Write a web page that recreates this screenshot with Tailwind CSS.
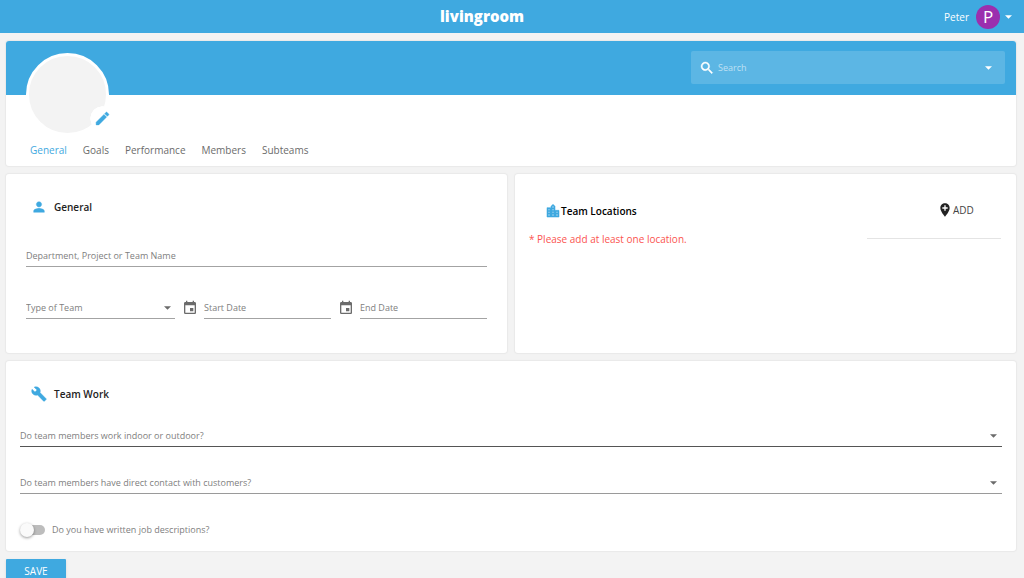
<!DOCTYPE html>
<html lang="en" class="[scrollbar-width:none]">
<head>
<meta charset="utf-8">
<meta name="viewport" content="width=device-width, initial-scale=1">
<title>livingroom</title>
<script src="https://cdn.jsdelivr.net/npm/@tailwindcss/browser@4"></script>
</head>
<body class="bg-[#f3f3f3] font-['Open_Sans','Noto_Sans',sans-serif] text-[9px] leading-4 text-[#808080]">
<header class="flex items-center h-[33px] bg-[#3fa9e0] pl-5 pr-3 text-white">
  <div class="flex-1 text-center">
    <a href="#" class="block pb-px font-extrabold text-[15px] leading-8">livingroom</a>
  </div>
  <button type="button" class="flex items-center gap-[7px] text-[10px]">
    <span>Peter</span>
    <span class="flex items-center justify-center size-6 rounded-full bg-[#9b2fae] text-[17px]">P</span>
    <svg class="w-[7px] h-1 -ml-[2px]" viewBox="0 0 8 4" fill="currentColor"><path d="M0 0h8L4 4z"/></svg>
  </button>
</header>

<main class="flex flex-col gap-2 pt-2 pl-[6px] pr-2">
  <section class="rounded-[3px] bg-white shadow-[0_0_1px_1px_#e9e9e9]">
    <div class="flex justify-end h-[54px] rounded-t-[3px] bg-[#3fa9e0] pt-[10px] pr-[11px]">
      <div class="flex items-center w-[314px] h-[33px] rounded-[2px] bg-[#5cb6e4] pl-2 pr-[13px] text-white">
        <svg class="size-4" viewBox="0 0 24 24" fill="currentColor" stroke="currentColor" stroke-width=".6"><path d="M15.5 14h-.79l-.28-.27A6.47 6.47 0 0 0 16 9.5 6.5 6.5 0 1 0 9.5 16c1.61 0 3.09-.59 4.23-1.57l.27.28v.79l5 4.99L20.49 19l-4.99-5zm-6 0C7.01 14 5 11.99 5 9.5S7.01 5 9.500 5 14 7.010 14 9.500 11.990 14 9.500 14z"/></svg>
        <input type="search" aria-label="Search" placeholder="Search" class="min-w-0 flex-1 ml-[3px] bg-transparent outline-none placeholder:text-white/60">
        <svg class="w-[7px] h-1" viewBox="0 0 8 4" fill="currentColor"><path d="M0 0h8L4 4z"/></svg>
      </div>
    </div>
    <div class="relative ml-5 -mt-[42px] size-[83px] rounded-full border-[3px] border-white bg-[#f3f3f3]">
      <button type="button" aria-label="Edit picture" class="absolute -right-[9px] bottom-[2px] flex items-center justify-center size-[25px] rounded-full text-[#3fa9e0] bg-[radial-gradient(white_68%,transparent_70%)]">
        <svg class="size-[17px]" viewBox="0 0 24 24" fill="currentColor" stroke="currentColor" stroke-width=".6"><path d="M3 17.250V21h3.750L17.810 9.940l-3.750-3.750L3 17.250zM20.710 7.040a1 1 0 0 0 0-1.410l-2.340-2.340a1 1 0 0 0-1.410 0l-1.830 1.830 3.750 3.750 1.830-1.830z"/></svg>
      </button>
    </div>
    <nav class="flex gap-4 pt-[6px] pb-2 pl-6 text-[10px] text-[#6b6b6b]">
      <a href="#" aria-current="page" class="text-[#3fa9e0]">General</a>
      <a href="#">Goals</a>
      <a href="#">Performance</a>
      <a href="#">Members</a>
      <a href="#">Subteams</a>
    </nav>
  </section>

  <div class="grid grid-cols-2 gap-2">
    <section class="rounded-[3px] bg-white px-5 pt-[25px] pb-[34px] shadow-[0_0_1px_1px_#e9e9e9]">
      <h2 class="flex items-center gap-[7px] pl-[5px] text-[10px] font-semibold text-[#222]">
        <svg class="size-4 text-[#3fa9e0]" viewBox="0 0 24 24" fill="currentColor" stroke="currentColor" stroke-width=".6"><path d="M12 12c2.210 0 4-1.790 4-4s-1.790-4-4-4-4 1.790-4 4 1.790 4 4 4zm0 2c-2.670 0-8 1.340-8 4v2h16v-2c0-2.660-5.330-4-8-4z"/></svg>
        General
      </h2>
      <input type="text" aria-label="Department, Project or Team Name" placeholder="Department, Project or Team Name" class="block w-full h-[19px] mt-[33px] border-b border-[#a3a3a3] pb-[3px] outline-none placeholder:text-[#808080]">
      <div class="flex items-start mt-[33px] gap-[7px]">
        <div class="relative w-[149px]">
          <select aria-label="Type of Team" class="block w-full h-[19px] appearance-none border-b border-[#a3a3a3] pb-[3px] outline-none"><option>Type of Team</option></select>
          <svg class="pointer-events-none absolute right-1 top-[6px] w-[7px] h-1 text-[#6b6b6b]" viewBox="0 0 8 4" fill="currentColor"><path d="M0 0h8L4 4z"/></svg>
        </div>
        <div class="flex flex-1 gap-[6px]">
          <svg class="size-4 text-[#6b6b6b]" viewBox="0 0 24 24" fill="currentColor"><path d="M17 12h-5v5h5v-5zM16 1v2H8V1H6v2H5c-1.110 0-1.990.9-1.990 2L3 19a2 2 0 0 0 2 2h14c1.100 0 2-.9 2-2V5c0-1.100-.9-2-2-2h-1V1h-2zm3 18H5V8h14v11z"/></svg>
          <input type="text" aria-label="Start Date" placeholder="Start Date" class="min-w-0 flex-1 h-[19px] border-b border-[#a3a3a3] pb-[3px] outline-none placeholder:text-[#808080]">
        </div>
        <div class="flex flex-1 gap-[6px]">
          <svg class="size-4 text-[#6b6b6b]" viewBox="0 0 24 24" fill="currentColor"><path d="M17 12h-5v5h5v-5zM16 1v2H8V1H6v2H5c-1.110 0-1.990.9-1.990 2L3 19a2 2 0 0 0 2 2h14c1.100 0 2-.9 2-2V5c0-1.100-.9-2-2-2h-1V1h-2zm3 18H5V8h14v11z"/></svg>
          <input type="text" aria-label="End Date" placeholder="End Date" class="min-w-0 flex-1 h-[19px] border-b border-[#a3a3a3] pb-[3px] outline-none placeholder:text-[#808080]">
        </div>
      </div>
    </section>

    <section class="flex items-start justify-between rounded-[3px] bg-white pt-7 pl-[14px] pr-[15px] shadow-[0_0_1px_1px_#e9e9e9]">
      <div class="pt-px">
        <h2 class="flex items-center pl-4 text-[10px] font-semibold text-black">
          <svg class="size-4 text-[#3fa9e0]" viewBox="0 0 24 24" fill="currentColor" stroke="currentColor" stroke-width=".8"><path d="M15 11V5l-3-3-3 3v2H3v14h18V11h-6zm-8 8H5v-2h2v2zm0-4H5v-2h2v2zm0-4H5V9h2v2zm6 8h-2v-2h2v2zm0-4h-2v-2h2v2zm0-4h-2V9h2v2zm0-4h-2V5h2v2zm6 12h-2v-2h2v2zm0-4h-2v-2h2v2z"/></svg>
          Team Locations
        </h2>
        <p class="mt-3 text-[10px] text-[#fb5450]">* Please add at least one location.</p>
      </div>
      <div class="w-[134px] border-b border-[#e4e4e4] pb-5 pl-[70px]">
        <button type="button" class="flex items-center text-[10px] text-[#444]">
          <svg class="size-4 text-[#222]" viewBox="0 0 24 24" fill="currentColor"><path d="M12 2C8.140 2 5 5.140 5 9c0 5.250 7 13 7 13s7-7.750 7-13c0-3.860-3.140-7-7-7zm4 8h-3v3h-2v-3H8V8h3V5h2v3h3v2z"/></svg>
          ADD
        </button>
      </div>
    </section>
  </div>

  <section class="rounded-[3px] bg-white px-[14px] pt-[25px] pb-[13px] shadow-[0_0_1px_1px_#e9e9e9]">
    <h2 class="flex items-center gap-[7px] pl-[11px] text-[10px] font-semibold text-[#222]">
      <svg class="size-4 text-[#3fa9e0]" viewBox="0 0 24 24" fill="currentColor" stroke="currentColor" stroke-width=".6"><path d="M22.700 19l-9.100-9.100c.9-2.300.4-5-1.500-6.900-2-2-5-2.400-7.400-1.300L9 6 6 9 1.600 4.700C.4 7.100.9 10.100 2.900 12.100c1.900 1.900 4.600 2.400 6.900 1.500l9.100 9.100c.4.4 1 .4 1.400 0l2.300-2.300c.5-.4.5-1.100.1-1.400z"/></svg>
      Team Work
    </h2>
    <div class="relative mt-[26px]">
      <select aria-label="Do team members work indoor or outdoor?" class="block w-full h-[19px] appearance-none border-b border-[#555] pb-[3px] outline-none"><option>Do team members work indoor or outdoor?</option></select>
      <svg class="pointer-events-none absolute right-[5px] top-[6px] w-[7px] h-1 text-[#6b6b6b]" viewBox="0 0 8 4" fill="currentColor"><path d="M0 0h8L4 4z"/></svg>
    </div>
    <div class="relative mt-7">
      <select aria-label="Do team members have direct contact with customers?" class="block w-full h-[19px] appearance-none border-b border-[#9a9a9a] pb-[3px] outline-none"><option>Do team members have direct contact with customers?</option></select>
      <svg class="pointer-events-none absolute right-[5px] top-[6px] w-[7px] h-1 text-[#6b6b6b]" viewBox="0 0 8 4" fill="currentColor"><path d="M0 0h8L4 4z"/></svg>
    </div>
    <label class="flex items-center gap-[7px] mt-7">
      <input type="checkbox" role="switch" class="relative ml-[3px] w-[22px] h-[10px] appearance-none rounded-full bg-[#bdbdbd] before:absolute before:-left-[3px] before:-top-[2px] before:size-[14px] before:rounded-full before:bg-[#fafafa] before:shadow-[0_1px_3px_rgba(0,0,0,0.4)]">
      Do you have written job descriptions?
    </label>
  </section>

  <div>
    <button type="button" class="w-[60px] h-6 rounded-[1px] bg-[#3fa9e0] text-[10px] text-white shadow-sm">SAVE</button>
  </div>
</main>
</body>
</html>
